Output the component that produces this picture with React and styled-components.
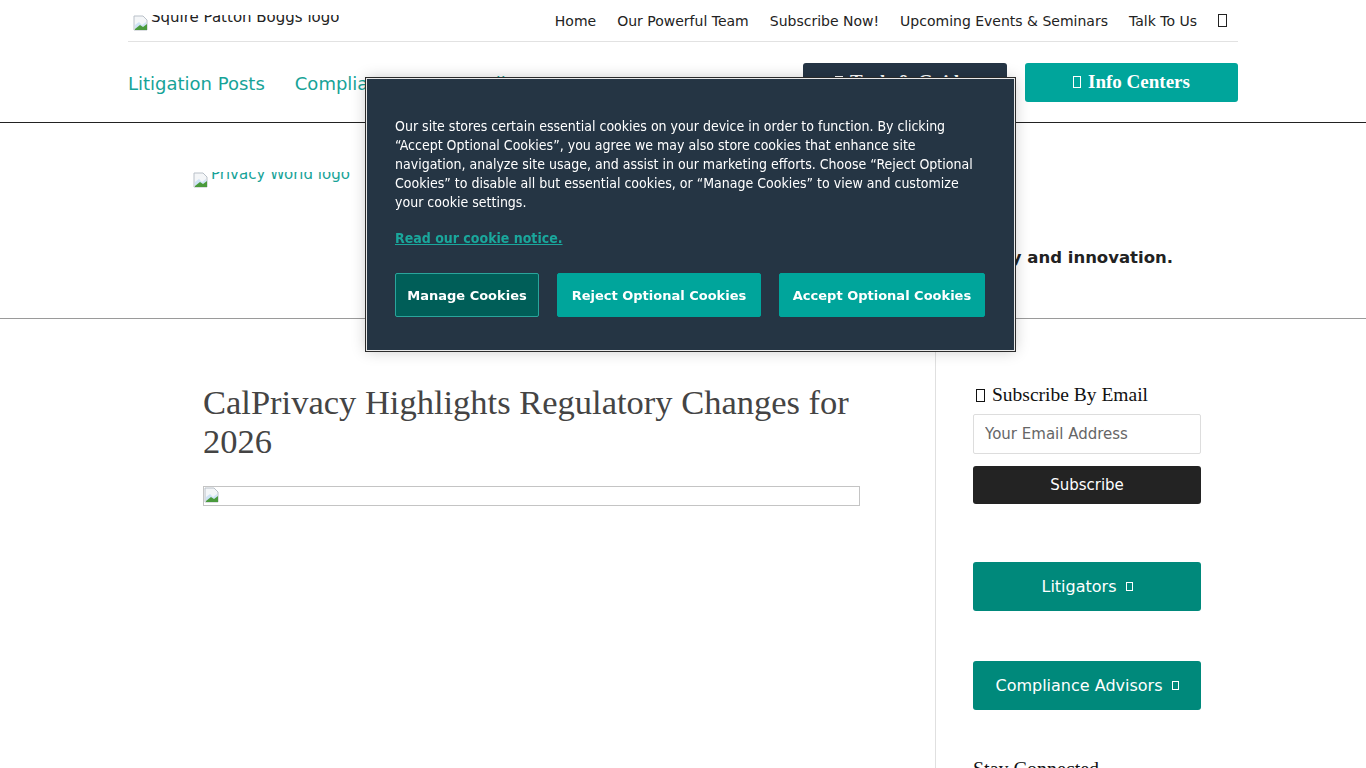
import React from "react";
import styled, { createGlobalStyle } from "styled-components";

const Global = createGlobalStyle`
  html, body { margin: 0; padding: 0; background: #fff; }
  body { font-family: "DejaVu Sans", Verdana, sans-serif; color: #222; overflow: hidden; }
  * { box-sizing: border-box; }
`;

const TEAL = "#00a59b";
const SERIF = `"Liberation Serif", Georgia, serif`;

const Page = styled.div`
  width: 1366px;
  min-height: 768px;
`;

const TopWrap = styled.header`
  width: 1110px;
  margin: 0 auto;
`;

const UtilityRow = styled.div`
  height: 42px;
  display: flex;
  align-items: center;
  justify-content: space-between;
  border-bottom: 1px solid #e2e2e2;
`;

const BrokenLogo = styled.div`
  display: flex;
  align-items: flex-start;
  gap: 2px;
  height: 18px;
  margin-left: ${(p) => p.$indent || 0}px;
  margin-top: ${(p) => p.$top || 0}px;
  align-self: flex-start;
`;

const AltText = styled.span`
  display: block;
  height: 14px;
  overflow: hidden;
  font-size: 15px;
  line-height: 14px;
  color: ${(p) => p.$color || "#222"};
  & > span { display: block; margin-top: -5px; }
`;

const Utility = styled.nav`
  display: flex;
  align-items: center;
  gap: 21px;
  padding-right: 11px;
  font-size: 14px;
  color: #222;
`;

const Tofu = styled.span`
  display: inline-block;
  width: ${(p) => p.$w || 8}px;
  height: ${(p) => p.$h || 12}px;
  border: 1px solid currentColor;
  vertical-align: ${(p) => p.$va || "-1px"};
`;

const MainNavRow = styled.div`
  height: 80px;
  display: flex;
  align-items: center;
  justify-content: space-between;
`;

const MainLinks = styled.nav`
  display: flex;
  gap: 30px;
  font-size: 18px;
  color: #17a398;
  padding-top: 2px;
`;

const Ctas = styled.div`
  display: flex;
  gap: 18px;
`;

const Cta = styled.a`
  display: flex;
  align-items: center;
  justify-content: center;
  gap: 7px;
  width: ${(p) => p.$w}px;
  height: 39px;
  border-radius: 3px;
  background: ${(p) => (p.$dark ? "#253545" : TEAL)};
  color: #fff;
  font-family: ${SERIF};
  font-weight: bold;
  font-size: 19px;
`;

const HeaderRule = styled.div`
  border-top: 1px solid #222;
`;

const Band = styled.section`
  height: 196px;
  border-bottom: 1px solid #9a9a9a;
`;

const BandInner = styled.div`
  width: 980px;
  margin: 0 auto;
  padding-top: 49px;
  display: flex;
  flex-direction: column;
`;

const Tagline = styled.p`
  margin: 58px 0 0;
  text-align: right;
  font-weight: bold;
  font-size: 16.5px;
  color: #222;
`;

const Main = styled.main`
  width: 1036px;
  margin: 0 auto;
  display: grid;
  grid-template-columns: 770px 266px;
  min-height: 450px;
`;

const Content = styled.article`
  padding: 64px 75px 0 38px;
`;

const Title = styled.h1`
  margin: 0;
  font-family: ${SERIF};
  font-weight: normal;
  font-size: 34.5px;
  line-height: 39px;
  color: #444;
`;

const Figure = styled.div`
  margin-top: 25px;
  height: 20px;
  border: 1px solid #c4c4c4;
  display: flex;
  align-items: flex-start;
`;

const Sidebar = styled.aside`
  border-left: 1px solid #e0e0e0;
  padding: 64px 0 0 37px;
  display: flex;
  flex-direction: column;
`;

const WidgetTitle = styled.h3`
  margin: 0 0 7px;
  font-family: ${SERIF};
  font-weight: normal;
  font-size: 19.5px;
  line-height: 24px;
  color: #111;
  display: flex;
  align-items: center;
  gap: 7px;
  padding-left: 3px;
`;

const EmailInput = styled.input`
  width: 228px;
  height: 40px;
  border: 1px solid #ddd;
  border-radius: 2px;
  padding: 0 11px;
  font-family: "DejaVu Sans", sans-serif;
  font-size: 15px;
  color: #333;
  &::placeholder { color: #666; }
`;

const SubscribeBtn = styled.button`
  margin-top: 12px;
  width: 228px;
  height: 38px;
  border: 0;
  border-radius: 3px;
  background: #232323;
  color: #fff;
  font-family: "DejaVu Sans", sans-serif;
  font-size: 15px;
`;

const SideButton = styled.a`
  margin-top: ${(p) => p.$mt}px;
  width: 228px;
  height: 49px;
  border-radius: 3px;
  background: #00897b;
  color: #fff;
  font-size: 16px;
  display: flex;
  align-items: center;
  justify-content: center;
  gap: 9px;
`;

const StayTitle = styled.h3`
  margin: 48px 0 0;
  font-family: ${SERIF};
  font-weight: normal;
  font-size: 20px;
  color: #111;
`;

/* cookie banner overlay */
const Banner = styled.div`
  position: fixed;
  left: 366px;
  top: 78px;
  width: 649px;
  height: 273px;
  background: #253544;
  border: 1px solid #e8e8e8;
  box-shadow: 0 0 0 1px #2b2b2b, 0 0 14px rgba(0, 0, 0, 0.22);
  padding: 38px 28px 0 28px;
  font-family: "DejaVu Sans Condensed", "DejaVu Sans", sans-serif;
  font-stretch: condensed;
  color: #fff;
`;

const BannerText = styled.p`
  margin: 0;
  font-size: 14px;
  line-height: 19px;
  font-weight: normal;
`;

const NoticeLink = styled.a`
  display: inline-block;
  margin-top: 17px;
  font-size: 14px;
  line-height: 19px;
  font-weight: bold;
  color: #1aa79c;
  text-decoration: underline;
`;

const BannerActions = styled.div`
  display: flex;
  gap: 18px;
  margin-top: 25px;
`;

const BannerBtn = styled.button`
  width: ${(p) => p.$w}px;
  height: 44px;
  border-radius: 2px;
  border: 1px solid ${(p) => (p.$outline ? "#2aa59c" : TEAL)};
  background: ${(p) => (p.$outline ? "#005e58" : TEAL)};
  color: #fff;
  font-family: "DejaVu Sans", sans-serif;
  font-weight: bold;
  font-size: 13px;
  padding: 0;
`;

const BrokenImg = () => (
  <svg width="16" height="16" viewBox="0 0 16 16" aria-hidden="true">
    <path d="M1 1h9l4 4v10H1z" fill="#f4f6f8" stroke="#b9c0c8" strokeWidth="1" />
    <path d="M2 10l4-3 3 3 4-3v7H2z" fill="#cfe3f5" />
    <path d="M2 14l5-4 3 2 4-3v6H2z" fill="#4a9a3c" />
  </svg>
);

export default function App() {
  return (
    <Page>
      <Global />
      <TopWrap>
        <UtilityRow>
          <BrokenLogo $indent={5} $top={15}>
            <BrokenImg />
            <AltText><span>Squire Patton Boggs logo</span></AltText>
          </BrokenLogo>
          <Utility>
            <span>Home</span>
            <span>Our Powerful Team</span>
            <span>Subscribe Now!</span>
            <span>Upcoming Events &amp; Seminars</span>
            <span>Talk To Us</span>
            <Tofu $w={9} $h={13} />
          </Utility>
        </UtilityRow>
        <MainNavRow>
          <MainLinks>
            <span>Litigation Posts</span>
            <span>Compliance Posts</span>
            <span>All Posts</span>
          </MainLinks>
          <Ctas>
            <Cta $dark $w={204}><Tofu $w={8} $h={12} />Tools &amp; Guides</Cta>
            <Cta $w={213}><Tofu $w={8} $h={12} />Info Centers</Cta>
          </Ctas>
        </MainNavRow>
      </TopWrap>
      <HeaderRule />
      <Band>
        <BandInner>
          <BrokenLogo>
            <BrokenImg />
            <AltText $color="#17a398"><span>Privacy World logo</span></AltText>
          </BrokenLogo>
          <Tagline>Privacy, data security and innovation.</Tagline>
        </BandInner>
      </Band>
      <Main>
        <Content>
          <Title>CalPrivacy Highlights Regulatory Changes for 2026</Title>
          <Figure><BrokenImg /></Figure>
        </Content>
        <Sidebar>
          <WidgetTitle><Tofu $w={9} $h={13} $va="0" />Subscribe By Email</WidgetTitle>
          <EmailInput placeholder="Your Email Address" />
          <SubscribeBtn>Subscribe</SubscribeBtn>
          <SideButton $mt={58}>Litigators<Tofu $w={7} $h={9} /></SideButton>
          <SideButton $mt={50}>Compliance Advisors<Tofu $w={7} $h={9} /></SideButton>
          <StayTitle>Stay Connected</StayTitle>
        </Sidebar>
      </Main>
      <Banner role="dialog">
        <BannerText>
          Our site stores certain essential cookies on your device in order to function. By clicking
          “Accept Optional Cookies”, you agree we may also store cookies that enhance site
          navigation, analyze site usage, and assist in our marketing efforts. Choose “Reject Optional
          Cookies” to disable all but essential cookies, or “Manage Cookies” to view and customize
          your cookie settings.
        </BannerText>
        <NoticeLink>Read our cookie notice.</NoticeLink>
        <BannerActions>
          <BannerBtn $outline $w={144}>Manage Cookies</BannerBtn>
          <BannerBtn $w={204}>Reject Optional Cookies</BannerBtn>
          <BannerBtn $w={206}>Accept Optional Cookies</BannerBtn>
        </BannerActions>
      </Banner>
    </Page>
  );
}
